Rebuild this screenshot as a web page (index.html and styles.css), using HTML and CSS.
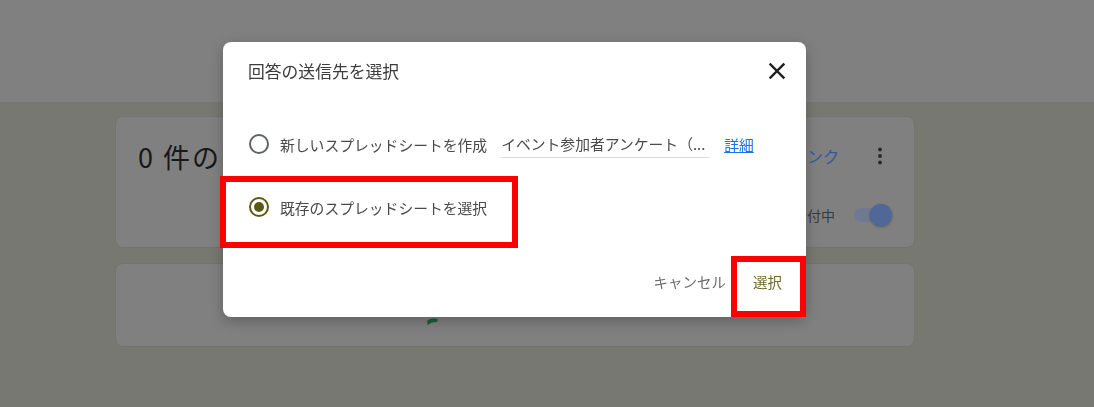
FILE: index.html
```html
<!DOCTYPE html>
<html lang="ja">
<head>
  <meta charset="UTF-8" />
  <title>回答の送信先を選択</title>
  <link rel="stylesheet" href="styles.css">
</head>
<body>

<!-- Seite hinter dem Dialog (bereits abgedunkelt) -->
<div class="page">
  <div class="top-band"></div>

  <div class="responses">
    <div class="card summary-card">
      <div class="summary-row">
        <span class="count">0 件の回答</span>
        <span class="sheet-link">スプレッドシートにリンク</span>
        <span class="more-dots">
          <svg width="24" height="24" viewBox="0 0 24 24"><circle cx="12" cy="5.5" r="2"/><circle cx="12" cy="12" r="2"/><circle cx="12" cy="18.5" r="2"/></svg>
        </span>
      </div>
      <div class="accept-row">
        <span class="accept-label">回答を受付中</span>
        <span class="toggle"><span class="toggle-thumb"></span></span>
      </div>
    </div>

    <div class="card waiting-card">
      <svg class="waiting-icon" width="14" height="8" viewBox="0 0 14 8"><path d="M1 3 Q6 -1 12 1.5 L11 4 Q6 3.5 1.5 7 Z"/></svg>
    </div>
  </div>
</div>

<div class="dialog">
  <div class="dialog-head">
    <span class="dialog-title">回答の送信先を選択</span>
    <span class="dialog-close">
      <svg width="28" height="28" viewBox="0 0 24 24"><path d="M19 6.41L17.59 5 12 10.59 6.41 5 5 6.41 10.59 12 5 17.59 6.41 19 12 13.41 17.59 19 19 17.59 13.41 12z"/></svg>
    </span>
  </div>

  <div class="dialog-body">
    <div class="option">
      <span class="radio"></span>
      <span class="option-label">新しいスプレッドシートを作成</span>
      <span class="sheet-name">イベント参加者アンケート（...</span>
      <a class="details" href="#">詳細</a>
    </div>
    <div class="option">
      <span class="radio checked"></span>
      <span class="option-label">既存のスプレッドシートを選択</span>
    </div>
  </div>

  <div class="dialog-foot">
    <span class="btn btn-cancel">キャンセル</span>
    <span class="btn btn-select">選択</span>
  </div>

  <!-- rote Markierungen -->
  <div class="mark mark-option"></div>
  <div class="mark mark-select"></div>
</div>

</body>
</html>
```

FILE: styles.css
```css
body {
  margin: 0;
  background: #787873;
  font-family: "Noto Sans CJK JP", "Noto Sans", sans-serif;
  overflow: hidden;
}
.top-band {
  height: 102px;
  background: #808080;
}
.responses {
  width: 800px;
  padding: 14px 0 0 115px;
}
.card {
  background: #808080;
  border: 1px solid #737370;
  border-radius: 8px;
  box-sizing: border-box;
  margin-bottom: 15px;
}
.summary-card {
  height: 132px;
  padding: 23px 22px 0 22px;
}
.summary-row {
  display: flex;
  align-items: center;
  height: 32px;
}
.count {
  font-size: 27px;
  letter-spacing: 2px;
  color: #181818;
  flex: 1;
  white-space: nowrap;
}
.sheet-link {
  font-size: 16px;
  color: #2f5aa3;
  margin-right: 29px;
}
.more-dots svg {
  display: block;
  fill: #2a2a2a;
}
.accept-row {
  display: flex;
  justify-content: flex-end;
  align-items: center;
  height: 24px;
  margin-top: 31px;
  padding-right: 4px;
}
.accept-label {
  font-size: 14px;
  color: #3a3a3a;
  margin-right: 19px;
}
.toggle {
  position: relative;
  width: 34px;
  height: 14px;
  border-radius: 7px;
  background: #6f7a92;
}
.toggle-thumb {
  position: absolute;
  right: -4px;
  top: -4px;
  width: 22px;
  height: 22px;
  border-radius: 50%;
  background: #4f6898;
  box-shadow: 0 1px 3px rgba(0,0,0,0.3);
}
.waiting-card {
  height: 84px;
  padding: 54px 0 0 310px;
}
.waiting-icon {
  display: block;
  fill: #1d5c3c;
}

/* Dialog */
.dialog {
  position: fixed;
  z-index: 10;
  left: 223px;
  top: 42px;
  width: 583px;
  height: 275px;
  background: #fff;
  border-radius: 8px;
  box-shadow: 0 4px 14px rgba(0,0,0,0.25);
  box-sizing: border-box;
}
.dialog-head {
  display: flex;
  align-items: center;
  height: 28px;
  padding: 15px 15px 0 25px;
}
.dialog-title {
  flex: 1;
  font-size: 16.8px;
  color: #3c3c3c;
}
.dialog-close svg {
  display: block;
  fill: #1f1f1f;
}
.dialog-body {
  padding: 39px 0 0 26px;
  display: flex;
  flex-direction: column;
  gap: 23px;
}
.option {
  display: flex;
  align-items: center;
  height: 40px;
}
.radio {
  width: 20px;
  height: 20px;
  box-sizing: border-box;
  border: 2px solid #5f6368;
  border-radius: 50%;
  display: flex;
  justify-content: center;
  align-items: center;
}
.radio.checked {
  border-color: #5a5a14;
}
.radio.checked::after {
  content: "";
  width: 10px;
  height: 10px;
  border-radius: 50%;
  background: #5a5a14;
}
.option-label {
  margin-left: 11px;
  font-size: 14.8px;
  color: #4a4a4a;
}
.sheet-name {
  margin-left: 14px;
  width: 208px;
  font-size: 14.8px;
  line-height: 20px;
  color: #4a4a4a;
  white-space: nowrap;
  border-bottom: 1px solid #dcdcdc;
  padding-bottom: 3px;
  margin-top: 4px;
}
.details {
  margin-left: 15px;
  font-size: 14.8px;
  color: #1a73e8;
}
.dialog-foot {
  display: flex;
  justify-content: flex-end;
  gap: 11px;
  padding: 37px 16px 0 0;
}
.btn {
  height: 36px;
  line-height: 36px;
  padding: 0 8px;
  font-size: 14.5px;
}
.btn-cancel {
  color: #6b6b6b;
}
.btn-select {
  color: #6c6b28;
}

/* Markierungen */
.mark {
  position: absolute;
  border: 6px solid #ff0000;
  box-sizing: border-box;
}
.mark-option {
  left: -3px;
  top: 134px;
  width: 298px;
  height: 72px;
}
.mark-select {
  left: 508px;
  top: 214px;
  width: 75px;
  height: 61px;
}
```
